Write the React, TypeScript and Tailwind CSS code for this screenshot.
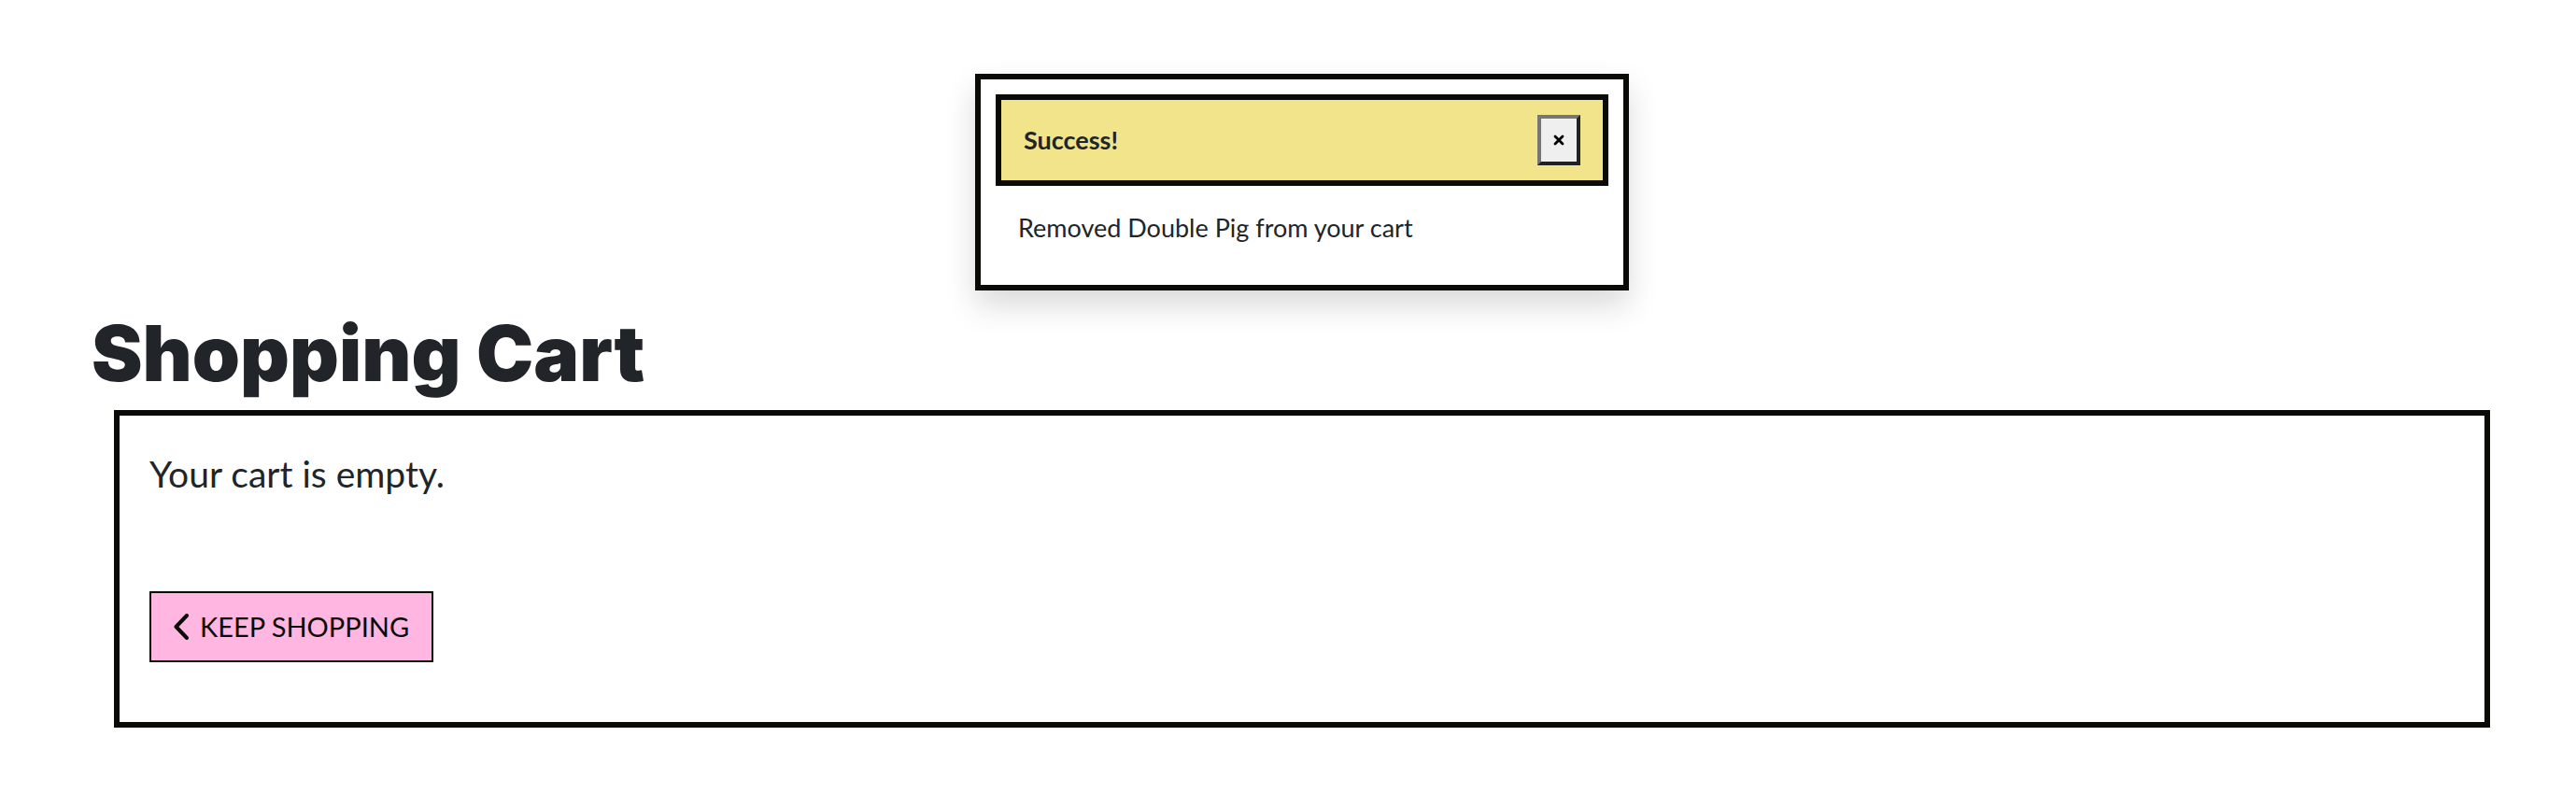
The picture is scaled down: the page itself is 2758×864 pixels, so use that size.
import { useState } from "react";

function Toast({ title, message, onClose }: { title: string; message: string; onClose: () => void }) {
  return (
    <section
      role="alert"
      className="mx-auto w-full max-w-[700px] border-[6px] border-[#0a0b06] bg-white p-4 shadow-[0_16px_32px_rgba(0,0,0,0.15)]"
    >
      <header className="flex items-center justify-between border-[6px] border-[#0a0b06] bg-[#f1e48b] px-6 py-4">
        <strong className="text-[27px] leading-[42px] font-bold">{title}</strong>
        <button
          type="button"
          aria-label="Close"
          onClick={onClose}
          className="flex h-[54px] w-[46px] items-center justify-center border-4 border-t-[#767676] border-r-[#212121] border-b-[#212121] border-l-[#767676] bg-[#efefef] text-black"
        >
          <svg viewBox="0 0 12 12" className="size-3" fill="none" stroke="currentColor" strokeWidth="2.8" strokeLinecap="round">
            <path d="M2 2l8 8M10 2l-8 8" />
          </svg>
        </button>
      </header>
      <p className="p-6 text-[27px] leading-[42px]">{message}</p>
    </section>
  );
}

export default function App() {
  const [open, setOpen] = useState(true);

  return (
    <main className="min-h-screen bg-white py-[79px] pr-[68px] pl-[98px] font-[Lato,sans-serif] text-[#212529]">
      {open && (
        <Toast title="Success!" message="Removed Double Pig from your cart" onClose={() => setOpen(false)} />
      )}
      <h1 className="mt-5 font-[Inter,sans-serif] text-[82px] leading-[96px] font-black">Shopping Cart</h1>
      <section className="mx-6 mt-3 border-[6px] border-[#0a0b06] px-8 pt-8 pb-16">
        <p className="text-[39px] leading-[60px]">Your cart is empty.</p>
        <a
          href="#shop"
          className="mt-24 inline-flex h-[76px] items-center gap-3 border-2 border-[#0a0b06] bg-[#ffb6e1] px-6 text-[29px] leading-[48px] text-[#0a0b06]"
        >
          <svg viewBox="0 0 16 28" className="h-7 w-4" fill="none" stroke="currentColor" strokeWidth="4" strokeLinecap="round" strokeLinejoin="round">
            <path d="M14 2L2.5 14L14 26" />
          </svg>
          KEEP SHOPPING
        </a>
      </section>
    </main>
  );
}
